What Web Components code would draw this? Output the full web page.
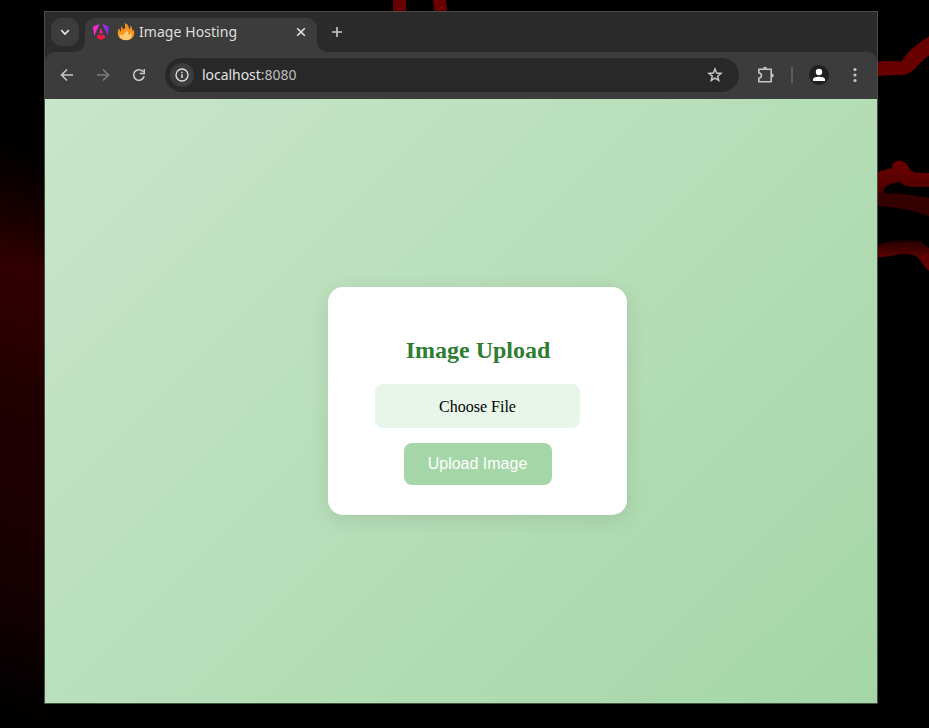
<!DOCTYPE html>
<html lang="en">
<head>
<meta charset="utf-8">
<title>Image Hosting</title>
<style>
html,body{margin:0;height:100%;overflow:hidden;background:#000}
</style>
</head>
<body>
<desk-top>
  <desk-wallpaper slot="wallpaper"></desk-wallpaper>
  <browser-window>
    <tab-strip slot="tabs"><browser-tab>Image Hosting</browser-tab></tab-strip>
    <browser-toolbar slot="toolbar"><address-bar>localhost<span style="color:#bdbfc1">:8080</span></address-bar></browser-toolbar>
    <upload-card><span slot="title">Image Upload</span><span slot="file">Choose File</span><span slot="action">Upload Image</span></upload-card>
  </browser-window>
</desk-top>
<script>
const define = (name, html) => {
  const t = document.createElement('template');
  t.innerHTML = html;
  customElements.define(name, class extends HTMLElement {
    constructor() {
      super();
      this.attachShadow({mode: 'open'}).appendChild(t.content.cloneNode(true));
    }
  });
};

define('desk-top', `
<style>
:host{display:block;box-sizing:border-box;width:929px;height:728px;padding:11px 0 0 44px;position:relative;overflow:hidden;background:#000}
</style>
<slot name="wallpaper"></slot><slot></slot>`);

define('desk-wallpaper', `
<style>
:host{position:absolute;inset:0}
svg{display:block}
</style>
<svg width="929" height="728" viewBox="0 0 929 728">
  <defs>
    <linearGradient id="glow" x1="0" y1="0" x2="0" y2="1">
      <stop offset="0" stop-color="#000"/><stop offset=".06" stop-color="#080000"/><stop offset=".14" stop-color="#1a0000"/>
      <stop offset=".22" stop-color="#300000"/><stop offset=".3" stop-color="#2d0000"/><stop offset=".42" stop-color="#210001"/>
      <stop offset=".65" stop-color="#1c0002"/><stop offset=".78" stop-color="#140002"/><stop offset=".92" stop-color="#060001"/><stop offset="1" stop-color="#000"/>
    </linearGradient>
    <linearGradient id="vein" x1="0" y1="0" x2="0" y2="1"><stop offset="0" stop-color="#6e0000"/><stop offset="1" stop-color="#4d0000"/></linearGradient>
    <linearGradient id="low" x1="0" y1="0" x2="0" y2="1"><stop offset="0" stop-color="#240000"/><stop offset=".5" stop-color="#5a0000"/><stop offset="1" stop-color="#640000"/></linearGradient>
    <filter id="soft" x="-10%" y="-10%" width="120%" height="120%"><feGaussianBlur stdDeviation=".6"/></filter>
  </defs>
  <rect x="-10" y="130" width="60" height="590" fill="url(#glow)" transform="skewY(20)"/>
  <path d="M393 0H406V11H393ZM433 0H446L447 11H434Z" fill="#680000"/>
  <circle cx="441.500" cy="7.500" r=".6" fill="#c43030"/>
  <g filter="url(#soft)">
    <path d="M876 62C887 60 895 62 902 61C908 50 919 43 931 35V54C921 61 917 67 912 71C905 77 900 74 876 76Z" fill="#680000"/>
    <path d="M876 173C883 170 889 169 892 168C892 158 906 159 909 168C912 173 917 173 931 173V187H910C904 186 902 183 898 182C892 184 884 184 883 193H876Z" fill="url(#vein)"/>
    <path d="M876 192C886 195 896 192 904 194L931 198V217C918 213 909 208 876 206Z" fill="#340000"/>
    <path d="M876 245C888 241 912 239 922 242L931 250V272C921 267 922 255 908 254C897 253 891 258 876 257Z" fill="url(#low)"/>
  </g>
</svg>`);

define('browser-window', `
<style>
:host{position:relative;display:flex;flex-direction:column;box-sizing:border-box;width:834px;height:693px;border:1px solid #4a4a4a;border-bottom-color:#3f5540;background:#2b2b2b}
main{flex:1;display:grid;place-items:center;box-sizing:border-box;padding-left:33px;background:linear-gradient(135deg,#c8e6c9,#a5d6a7)}
</style>
<slot name="tabs"></slot><slot name="toolbar"></slot><main><slot></slot></main>`);

define('tab-strip', `
<style>
:host{display:flex;height:40px;box-sizing:border-box;padding:6px 0 0 6px;background:#2b2b2b}
.search{width:28px;height:28px;border-radius:10px;background:#3c3c3c;margin-right:6px}
svg{display:block}
</style>
<div class="search"><svg width="28" height="28" fill="none" stroke="#e3e3e3" stroke-width="1.7"><path d="M10.200 12.200L14 16L17.800 12.200"/></svg></div>
<slot></slot>
<svg width="28" height="28" style="margin-left:6px" fill="none" stroke="#c7c7c7" stroke-width="1.6"><path d="M14 9V19M9 14H19"/></svg>`);

define('browser-tab', `
<style>
:host{position:relative;display:flex;align-items:center;box-sizing:border-box;width:232px;height:34px;padding:0 8px 6px;border-radius:10px 10px 0 0;background:#3c3c3c;color:#dfdfdf}
:host::before,:host::after{content:"";position:absolute;bottom:0;width:10px;height:10px}
:host::before{left:-10px;background:radial-gradient(circle at 0 0,transparent 9.5px,#3c3c3c 10px)}
:host::after{right:-10px;background:radial-gradient(circle at 100% 0,transparent 9.5px,#3c3c3c 10px)}
svg{display:block;flex:none}
.t{flex:1;margin:0 0 0 4px;white-space:nowrap;font:14px/20px "Noto Sans",sans-serif;letter-spacing:.06px}
</style>
<svg width="16" height="16" viewBox="0 0 16 16">
  <defs>
    <linearGradient id="w" x1="0" x2="1" y1="0" y2="0"><stop offset="0" stop-color="#ff2bc4"/><stop offset=".4" stop-color="#e02fd0"/><stop offset="1" stop-color="#6a2fe0"/></linearGradient>
    <linearGradient id="b" x1="0" x2="0" y1="0" y2="1"><stop offset="0" stop-color="#c42ad2"/><stop offset="1" stop-color="#f0206a"/></linearGradient>
  </defs>
  <path d="M0 2.500L6.600 0L1.200 12ZM16 2.500L9.400 0L14.800 12Z" fill="url(#w)"/>
  <path d="M8 4L10.300 9.500H5.700Z" fill="url(#b)"/>
  <path d="M4.800 11H11.200L12.500 13.400L8 16L3.500 13.400Z" fill="#ff1548"/>
</svg>
<svg width="18" height="18" viewBox="0 0 18 18" style="margin-left:8px">
  <path d="M7.300 .3C12.500 1.500 11.200 4.600 12.600 6.400C13.600 5.500 13.300 3.500 13 2.600C15.500 4 14.800 6.200 15.800 8C16.900 7.400 16.800 6.300 16.700 5.800C18.800 13 15 17.300 9.500 17.300C4 17.300 .3 14 .8 10C1 8 1.700 7 1.300 5.600C2.900 6.200 3 7.500 3.900 9C4.600 7.500 3.200 4.800 4.700 3C5.200 5 5.800 5.700 6.800 6.500C8.500 5 8.600 2.300 7.300 .3Z" fill="#f8941f"/>
  <path d="M9.300 7.200C11.600 9 11 11 12 12C13.300 11.500 13.200 10 14.300 9.200C15.800 14 13.500 17 9.300 17C5.300 17 2.500 15 2.700 11.200C4 11.500 4.500 12.200 5.500 12.200C6.300 10.500 9 10 9.300 7.200Z" fill="#fbcb74"/>
</svg>
<span class="t"><slot></slot></span>
<svg width="16" height="16" fill="none" stroke="#e3e3e3" stroke-width="1.600"><path d="M4.200 4.200L11.800 11.800M11.800 4.200L4.200 11.800"/></svg>`);

define('browser-toolbar', `
<style>
:host{display:flex;align-items:center;height:47px;background:#3c3c3c;border-radius:9px 9px 0 0;box-sizing:border-box;padding:0 8px 1px}
svg{display:block;flex:none}
.sep{width:2px;height:16px;background:#5c5c5c;margin:0 10px 0 12px}
</style>
<svg width="28" height="28" fill="none" stroke="#c7c7c7" stroke-width="1.600"><path d="M20 14H8.800M14 8.500L8.500 14L14 19.500"/></svg>
<svg width="28" height="28" style="margin-left:8px" fill="none" stroke="#7b7b7b" stroke-width="1.600"><path d="M8 14H19.200M14 8.500L19.500 14L14 19.500"/></svg>
<svg width="28" height="28" style="margin-left:8px" fill="none" stroke="#c7c7c7" stroke-width="1.600"><path d="M18.200 10.800A5.300 5.300 0 1 0 19.100 15.300"/><path d="M19.200 8V12.500H14.700"/></svg>
<slot></slot>
<svg width="28" height="28" style="margin-left:12px" fill="none" stroke="#c7c7c7" stroke-width="1.600"><path d="M7.800 8.300H20.200V20.700H7.800V17.200C11.400 16.500 11.400 12.500 7.800 11.800Z" stroke-linejoin="round"/><path d="M12 7.800A2 2 0 0 1 16 7.800ZM20.700 12.500A2 2 0 0 1 20.700 16.500Z" fill="#c7c7c7" stroke="none"/></svg>
<div class="sep"></div>
<svg width="28" height="28" style="margin-left:2px"><circle cx="14" cy="14" r="10" fill="#1f2021"/><circle cx="14" cy="11" r="3.200" fill="#fff"/><path d="M8 20V18.300C8 14.800 20 14.800 20 18.300V20Z" fill="#fff"/></svg>
<svg width="28" height="28" style="margin-left:8px" fill="#c7c7c7"><circle cx="14" cy="8.500" r="1.600"/><circle cx="14" cy="14" r="1.600"/><circle cx="14" cy="19.500" r="1.600"/></svg>`);

define('address-bar', `
<style>
:host{display:flex;align-items:center;box-sizing:border-box;width:574px;height:34px;margin-left:12px;padding:0 10px 0 5px;border-radius:17px;background:#282828;color:#e3e3e3;font:14px "Noto Sans",sans-serif}
svg{display:block;flex:none}
.u{flex:1;margin-left:8px;line-height:20px;white-space:nowrap;letter-spacing:-.04px}
</style>
<svg width="24" height="24" fill="none"><circle cx="12" cy="12" r="12" fill="#3c3c3c"/><circle cx="12" cy="12" r="6" stroke="#e3e3e3" stroke-width="1.300"/><path d="M12 11.200V15M12 8.800V10.200" stroke="#e3e3e3" stroke-width="1.400"/></svg>
<span class="u"><slot></slot></span>
<svg width="28" height="28" fill="none" stroke="#c7c7c7" stroke-width="1.500"><path d="M14 8L15.700 12L20 12.400L16.700 15.200L17.700 19.400L14 17.200L10.300 19.400L11.300 15.200L8 12.400L12.300 12Z"/></svg>`);

define('upload-card', `
<style>
:host{display:flex;flex-direction:column;align-items:center;box-sizing:border-box;width:299px;height:228px;padding:50px 47px 30px;border-radius:15px;background:#fff;box-shadow:0 4px 20px rgba(0,0,0,.1);font-family:"Liberation Serif",serif}
h2{margin:0 0 20px;padding-left:1px;font-size:24px;line-height:27px;color:#2e7d32;white-space:nowrap}
label{display:grid;place-items:center;box-sizing:border-box;width:100%;height:44px;padding-top:2px;border-radius:8px;background:#e8f5e9;font-size:16px;color:#000}
button{margin:15px 0 0;width:148px;height:42px;padding:0;border:0;border-radius:8px;background:#a5d6a7;color:#fff;font:16px "Liberation Sans",sans-serif}
</style>
<h2><slot name="title"></slot></h2><label><slot name="file"></slot></label><button><slot name="action"></slot></button>`);
</script>
</body>
</html>
